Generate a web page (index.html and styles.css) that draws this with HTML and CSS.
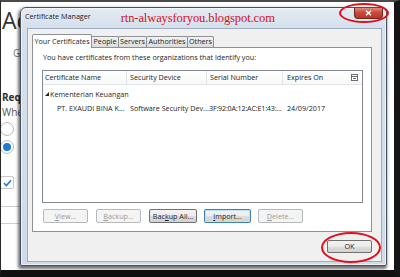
FILE: index.html
```html
<!DOCTYPE html>
<html>
<head>
<meta charset="utf-8">
<link rel="stylesheet" href="styles.css">
</head>
<body>
<div class="screen">
  <div class="page">
    <div class="page-title">Ac</div>
    <div class="page-sub">G</div>
    <div class="page-req">Requ</div>
    <div class="page-when">Whe</div>
    <div class="radio"></div>
    <div class="radio on"></div>
    <div class="check"><svg width="9" height="8" viewBox="0 0 9 8"><path d="M1 4.2 L3.4 6.5 L8 1.2" fill="none" stroke="#2a7bd0" stroke-width="1.6"/></svg></div>
    <div class="field"></div>
  </div>

  <div class="dialog">
    <div class="titlebar">
      <span class="title">Certificate Manager</span>
      <span class="watermark">rtn-alwaysforyou.blogspot.com</span>
      <span class="close"><svg width="7" height="6" viewBox="0 0 7 6"><path d="M1 0.8 L6 5.2 M6 0.8 L1 5.2" stroke="#fff" stroke-width="1.5"/></svg></span>
    </div>
    <div class="client">
      <div class="tabs">
        <span class="tab sel w1">Your Certificates</span>
        <span class="tab w2">People</span>
        <span class="tab w3">Servers</span>
        <span class="tab w4">Authorities</span>
        <span class="tab w5">Others</span>
      </div>
      <div class="panel">
        <p class="intro">You have certificates from these organizations that identify you:</p>
        <div class="table">
          <div class="thead">
            <span class="c c1">Certificate Name</span>
            <span class="c c2">Security Device</span>
            <span class="c c3">Serial Number</span>
            <span class="c c4">Expires On</span>
            <span class="picker"><svg width="7" height="7" viewBox="0 0 7 7"><rect x="0.5" y="0.5" width="6" height="6" fill="#fff" stroke="#6d6d6d"/><path d="M0.5 2.5 H6.5 M2 4.5 H5" stroke="#6d6d6d"/></svg></span>
          </div>
          <div class="row">
            <span class="c c1 group"><svg class="twisty" width="4" height="4" viewBox="0 0 4 4"><path d="M4 0 V4 H0 Z" fill="#222"/></svg>Kementerian Keuangan</span>
          </div>
          <div class="row">
            <span class="c c1 child">PT. EXAUDI BINA K...</span>
            <span class="c c2">Software Security Dev...</span>
            <span class="c c3">3F:92:0A:12:AC:E1:43:...</span>
            <span class="c c4">24/09/2017</span>
          </div>
        </div>
        <div class="buttons">
          <span class="btn dis b1"><u>V</u>iew...</span>
          <span class="btn dis b2"><u>B</u>ackup...</span>
          <span class="btn b3">Bac<u>k</u>up All...</span>
          <span class="btn focus b4"><u>I</u>mport...</span>
          <span class="btn dis b5"><u>D</u>elete...</span>
        </div>
      </div>
      <div class="footer">
        <span class="btn ok">OK</span>
      </div>
    </div>
  </div>

  <div class="ring ring-close"></div>
  <div class="ring ring-ok"></div>
</div>
</body>
</html>
```

FILE: styles.css
```css
* { box-sizing: border-box; }
html, body { margin: 0; padding: 0; background: #111; }
body { width: 400px; height: 277px; overflow: hidden; }

.screen {
  position: relative;
  width: 400px;
  height: 277px;
  background: #fff;
  border-top: 2px solid #4a4a4a;
  border-left: 1px solid #2a2a2a;
  border-right: 6px solid #161616;
  border-bottom: 7px solid #111;
  overflow: hidden;
  font-family: "Open Sans", "Noto Sans", sans-serif;
}

/* background web page */
.page {
  display: flex;
  flex-direction: column;
  align-items: flex-start;
  color: #333;
  font-family: "Open Sans", sans-serif;
}
.page-title { font-size: 23px; line-height: 26px; margin: 5px 0 0 1px; color: #333; }
.page-sub { font-size: 10px; line-height: 12px; margin: 14px 0 0 12px; color: #777; }
.page-req { font-size: 10px; line-height: 12px; font-weight: 700; margin: 32px 0 0 1px; color: #333; }
.page-when { font-size: 10px; line-height: 12px; margin: 3px 0 0 1px; color: #555; }
.radio {
  width: 14px; height: 14px; border-radius: 50%;
  border: 1px solid #bbb; margin: 4px 0 0 -1px; background: #fff;
  display: flex; align-items: center; justify-content: center;
}
.radio.on { margin-top: 4px; }
.radio.on::after { content: ""; width: 8px; height: 8px; border-radius: 50%; background: #1d7ad6; }
.check {
  width: 14px; height: 13px; border: 1px solid #c8c8c8; margin: 22px 0 0 -1px;
  display: flex; align-items: center; justify-content: center; border-radius: 2px;
}
.field { width: 40px; height: 18px; border: 1px solid #cfcfcf; margin: 17px 0 0 -1px; }

/* dialog window */
.dialog {
  position: absolute;
  left: 19px;
  top: 5px;
  width: 367px;
  height: 259px;
  border: 1px solid #46525f;
  border-radius: 6px 6px 2px 2px;
  background: linear-gradient(#e3ebf3, #d5e0ec 20px, #cfdbe8);
  padding: 0 4px 3px 6px;
  display: flex;
  flex-direction: column;
  box-shadow: -1px 2px 3px 1px rgba(0,0,0,0.55), 0 0 0 1px rgba(255,255,255,0.6) inset;
}
.titlebar {
  height: 20px;
  display: flex;
  align-items: flex-start;
  position: relative;
}
.title {
  font-size: 7.2px;
  line-height: 10px;
  color: #1b1b1b;
  margin: 3px 0 0 -2px;
}
.watermark {
  font-family: "Liberation Serif", serif;
  font-size: 12.5px;
  line-height: 14px;
  color: #d4111b;
  margin: 3px 0 0 30px;
  letter-spacing: -0.1px;
}
.close {
  margin-left: auto;
  margin-right: -1px;
  width: 29px;
  height: 11px;
  border: 1px solid #6d2a22;
  border-top: none;
  border-radius: 0 0 4px 4px;
  background: linear-gradient(#dc8d80, #c9493b 45%, #b8372a);
  display: flex;
  align-items: center;
  justify-content: center;
}

.client {
  flex: 1;
  background: #f0f0f0;
  border: 1px solid #9cadc0;
  padding: 5px 9px 8px 4px;
  display: flex;
  flex-direction: column;
}

.tabs { display: flex; align-items: flex-end; height: 13px; position: relative; z-index: 1; }
.tab {
  font-size: 7.2px;
  line-height: 9px;
  height: 11px;
  border: 1px solid #8d9096;
  border-bottom: none;
  margin-left: -1px;
  background: linear-gradient(#f2f2f2, #dcdcdc);
  color: #1e1e1e;
  text-align: center;
  white-space: nowrap;
  border-radius: 2px 2px 0 0;
}
.tab.sel {
  height: 14px;
  margin-bottom: -1px;
  margin-left: 0;
  background: #fff;
  line-height: 12px;
}
.w1 { width: 60px; }
.w2 { width: 28px; }
.w3 { width: 29px; }
.w4 { width: 42px; }
.w5 { width: 27px; }

.panel {
  height: 185px;
  background: #fff;
  border: 1px solid #8d9096;
  padding: 0 8px 8px 9px;
  display: flex;
  flex-direction: column;
}
.intro {
  margin: 4px 0 0 1px;
  font-size: 7.2px;
  line-height: 10px;
  color: #1e1e1e;
  white-space: nowrap;
}
.table {
  margin-top: 8px;
  height: 133px;
  border: 1px solid #828790;
  background: #fff;
}
.thead {
  height: 14px;
  display: flex;
  align-items: center;
  border-bottom: 1px solid #e2e4e7;
  background: linear-gradient(#ffffff, #f7f8f9);
  position: relative;
}
.c {
  font-size: 7.2px;
  line-height: 10px;
  color: #262626;
  white-space: nowrap;
  flex: none;
}
.thead .c { border-right: 1px solid #e3e5e8; height: 13px; line-height: 13px; overflow: hidden; }
.c1 { width: 84px; padding-left: 2px; }
.c2 { width: 80px; padding-left: 3px; }
.c3 { width: 76px; padding-left: 3px; }
.c4 { width: 64px; padding-left: 4px; }
.row .c3 { padding-left: 2px; letter-spacing: -0.2px; }
.thead .c4 { border-right: none; }
.picker { margin-left: auto; margin-right: 4px; display: flex; }
.row { height: 14px; display: flex; align-items: center; }
.row:nth-child(2) { margin-top: 2px; }
.group { display: flex; align-items: center; width: 200px; }
.twisty { margin-right: 1px; }
.child { padding-left: 14px; }

.buttons { display: flex; margin-top: 6px; margin-left: 1px; }
.btn {
  height: 14px;
  font-size: 7.2px;
  line-height: 12px;
  text-align: center;
  border: 1px solid #707070;
  border-radius: 2px;
  background: linear-gradient(#f3f3f3, #ebebeb 50%, #dddddd 51%, #d2d2d2);
  color: #1e1e1e;
  white-space: nowrap;
}
.btn u { text-decoration: underline; text-underline-offset: 1px; }
.btn.dis { background: #f4f4f4; border-color: #b5b9bc; color: #9a9a9a; }
.btn.focus { border-color: #3c7fb1; box-shadow: inset 0 0 0 1px #bde3f7; }
.b1 { width: 45px; }
.b2 { width: 45px; margin-left: 8px; }
.b3 { width: 48px; margin-left: 8px; }
.b4 { width: 47px; margin-left: 7px; }
.b5 { width: 45px; margin-left: 7px; }

.footer { display: flex; justify-content: flex-end; margin-top: 8px; }
.btn.ok { width: 45px; height: 13px; line-height: 11px; }

/* red annotation ellipses */
.ring {
  position: absolute;
  border: 2px solid #e0101a;
  border-radius: 50%;
}
.ring-close { left: 338px; top: 1px; width: 50px; height: 20px; }
.ring-ok { left: 320px; top: 230px; width: 60px; height: 31px; }
```
